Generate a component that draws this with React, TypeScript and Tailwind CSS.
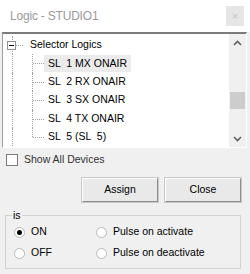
import React from 'react';

const items = ['SL  1 MX ONAIR', 'SL  2 RX ONAIR', 'SL  3 SX ONAIR', 'SL  4 TX ONAIR', 'SL  5 (SL  5)'];

function Chevron({ up }: { up?: boolean }) {
  return (
    <svg width="9" height="6" viewBox="0 0 9 6">
      <path
        d={up ? 'M1 5 L4.5 1.5 L8 5' : 'M1 1 L4.5 4.5 L8 1'}
        fill="none"
        stroke="#606060"
        strokeWidth="1.6"
      />
    </svg>
  );
}

function Radio({ checked }: { checked?: boolean }) {
  return (
    <span className="w-[11px] h-[11px] rounded-full border border-[#b9b9b9] bg-white flex items-center justify-center shrink-0">
      {checked && <span className="w-[5px] h-[5px] rounded-full bg-black" />}
    </span>
  );
}

export default function App() {
  return (
    <div className="w-[250px] h-[274px] bg-[#f0f0f0] flex flex-col font-['Liberation_Sans',Arial,sans-serif] text-[10.5px] text-black overflow-hidden">
      {/* title bar */}
      <div className="h-[32px] bg-white flex items-center justify-between pl-[10px] pr-[6px] shrink-0">
        <span className="text-[12px] tracking-[-0.2px] text-[#9a9a9a]">Logic - STUDIO1</span>
        <div className="w-[18px] h-[20px] bg-[#e6e6e6] flex items-center justify-center text-[11px] text-[#c4c4c4]">×</div>
      </div>

      {/* tree view */}
      <div className="ml-[2px] mr-[3px] h-[116px] border-t-2 border-l border-t-[#7c7c7c] border-l-[#a0a0a0] border-r border-b border-r-white border-b-white bg-white flex shrink-0">
        <div className="flex-1 flex flex-col pt-[2px]">
          <div className="h-[18.4px] flex items-center relative">
            <div className="w-[27px] h-full relative shrink-0">
              <span className="absolute left-[9px] top-0 bottom-0 border-l border-dotted border-[#a0a0a0]" />
              <span className="absolute left-[4px] top-[5px] w-[9px] h-[9px] border border-[#919191] bg-white flex items-center justify-center">
                <span className="w-[5px] h-px bg-black" />
              </span>
              <span className="absolute left-[13px] right-[7px] top-[9px] border-t border-dotted border-[#a0a0a0]" />
            </div>
            <span>Selector Logics</span>
          </div>
          {items.map((t, i) => (
            <div key={t} className="h-[18.4px] flex items-center">
              <div className="w-[27px] h-full relative shrink-0">
                <span className="absolute left-[9px] top-0 bottom-0 border-l border-dotted border-[#a0a0a0]" />
              </div>
              <div className="w-[14px] h-full relative shrink-0">
                <span className={`absolute left-[2px] top-0 border-l border-dotted border-[#a0a0a0] ${i === items.length - 1 ? 'h-[9px]' : 'bottom-0'}`} />
                <span className="absolute left-[3px] right-0 top-[9px] border-t border-dotted border-[#a0a0a0]" />
              </div>
              <span className={`whitespace-pre pl-[4px] pr-[4px] h-[17px] flex items-center ${i === 0 ? 'bg-[#ebebeb]' : ''}`}>{t}</span>
            </div>
          ))}
        </div>
        {/* scrollbar */}
        <div className="w-[17px] bg-[#f0f0f0] flex flex-col shrink-0">
          <div className="h-[17px] flex items-center justify-center">
            <Chevron up />
          </div>
          <div className="flex-1 px-[1px]">
            <div className="mt-[41px] h-[17px] bg-[#cdcdcd]" />
          </div>
          <div className="h-[17px] flex items-center justify-center">
            <Chevron />
          </div>
        </div>
      </div>

      {/* show all devices */}
      <div className="mt-[5px] pl-[6px] flex items-center gap-[6px] h-[13px]">
        <span className="w-[12px] h-[12px] border border-[#7a7a7a] bg-white shrink-0" />
        <span className="text-[#333]">Show All Devices</span>
      </div>

      {/* buttons */}
      <div className="mt-[12px] flex justify-end gap-[7px] pr-[9px]">
        {['Assign', 'Close'].map((b) => (
          <div
            key={b}
            className="w-[76px] h-[24px] bg-[#e9e9e9] border border-t-white border-l-white border-r-[#8c8c8c] border-b-[#8c8c8c] shadow-[0_0_0_1px_#c8c8c8] flex items-center justify-center"
          >
            {b}
          </div>
        ))}
      </div>

      {/* group box */}
      <div className="mt-[13px] ml-[5px] w-[236px] h-[54px] border border-[#d3d3d3] relative">
        <span className="absolute -top-[7px] left-[6px] bg-[#f0f0f0] px-px leading-[12px]">is</span>
        <div className="pt-[10px] pl-[8px] grid grid-cols-[82px_1fr] gap-y-[9px]">
          <div className="flex items-center gap-[6px] h-[12px]">
            <Radio checked />
            <span>ON</span>
          </div>
          <div className="flex items-center gap-[6px] h-[12px]">
            <Radio />
            <span>Pulse on activate</span>
          </div>
          <div className="flex items-center gap-[6px] h-[12px]">
            <Radio />
            <span>OFF</span>
          </div>
          <div className="flex items-center gap-[6px] h-[12px]">
            <Radio />
            <span>Pulse on deactivate</span>
          </div>
        </div>
      </div>
    </div>
  );
}
